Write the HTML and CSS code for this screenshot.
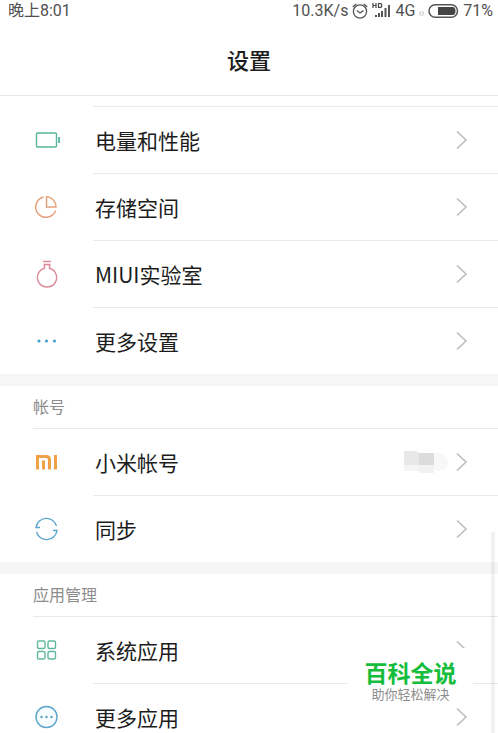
FILE: index.html
```html
<!DOCTYPE html>
<html lang="zh-CN">
<head>
<meta charset="utf-8">
<meta name="viewport" content="width=device-width, initial-scale=1">
<title>设置</title>
<link rel="stylesheet" href="styles.css">
</head>
<body>
<svg class="defs" aria-hidden="true">
  <symbol id="chevron" viewBox="0 0 12 20"><path d="M1 1.5 10 10 1 18.5" fill="none" stroke="#bdbdbd" stroke-width="1.6"/></symbol>
</svg>
<div class="screen">
  <div class="status">
    <span>晚上8:01</span>
    <div class="status-right">
      <span>10.3K/s</span>
      <svg class="alarm" width="16" height="16" viewBox="0 0 16 16" fill="none" stroke="#555" stroke-width="1.3"><circle cx="8" cy="8.5" r="6.6"/><path d="M.8 4 4.2 1M15.2 4 11.8 1M4.8 7.6 8 10l3.400-2.400"/></svg>
      <svg class="signal" width="19" height="16" viewBox="0 0 19 16"><path d="M1 0v5M4 0v5M1 2.500h3M6.500.5v4h1.200q2 0 2-2t-2-2z" fill="none" stroke="#444" stroke-width="1.200"/><path d="M3 12h2v2H3zM6 10h2v4H6zM9 8h2v6H9zM12.500 5h2v9h-2zM16 2h2v12h-2z" fill="#555"/></svg>
      <span>4G</span>
      <svg class="data" width="5" height="16" viewBox="0 0 5 16" fill="none" stroke="#bbb"><path d="M1 12.500v-3L2.500 8M4 8.500v3L2.500 13"/></svg>
      <svg class="battery" width="31" height="16" viewBox="0 0 31 16"><rect x="1" y="1.700" width="28.500" height="12.600" rx="6.300" fill="none" stroke="#555" stroke-width="1.500"/><path d="M10 4h14.500q3 0 3 4t-3 4H10z" fill="#444"/></svg>
      <span>71%</span>
    </div>
  </div>
  <header><h1>设置</h1></header>
  <main>
    <section class="group first">
      <a class="row" href="#"><span class="icon"><svg width="28" height="26" viewBox="0 0 28 26" fill="none" stroke="#56b79d" stroke-width="1.400"><rect x="3.500" y="6" width="20" height="14" rx="1"/><path d="M26 10v6" stroke-width="1.800"/></svg></span><span class="label">电量和性能</span><svg class="chevron"><use href="#chevron"/></svg></a>
      <a class="row" href="#"><span class="icon"><svg width="26" height="26" viewBox="0 0 26 26" fill="none" stroke="#e6a27d" stroke-width="1.500"><path d="M10.500 3A10.300 10.300 0 1 0 22.700 16.500M13.500 2.700V13H23A10 10 0 0 0 13.500 2.700z"/></svg></span><span class="label">存储空间</span><svg class="chevron"><use href="#chevron"/></svg></a>
      <a class="row" href="#"><span class="icon"><svg width="26" height="28" viewBox="0 0 26 28" fill="none" stroke="#dc8998" stroke-width="1.400"><path d="M10 1.500h8M10.500 4.500h7M11.500 4.500v3.700a9.600 9.600 0 1 0 5 0V4.500"/></svg></span><span class="label">MIUI实验室</span><svg class="chevron"><use href="#chevron"/></svg></a>
      <a class="row" href="#"><span class="icon"><svg width="26" height="26" viewBox="0 0 26 26" fill="#43a0cb"><circle cx="6" cy="13" r="1.600"/><circle cx="13.500" cy="13" r="1.600"/><circle cx="21.500" cy="13" r="1.600"/></svg></span><span class="label">更多设置</span><svg class="chevron"><use href="#chevron"/></svg></a>
    </section>
    <section class="group">
      <h2>帐号</h2>
      <a class="row" href="#"><span class="icon"><svg width="26" height="26" viewBox="0 0 26 26" fill="none" stroke="#f0a047" stroke-width="3"><path d="M4.500 20.500V7.500H13Q16.500 7.500 16.500 11v9.500M10.500 11.500v9M22.500 6v14.500"/></svg></span><span class="label">小米帐号</span><svg class="masked" width="46" height="24" viewBox="0 0 46 24"><path d="M0 1h15v20H0z" fill="#f5f5f5"/><path d="M30 3h6q8 3 8 10t-8 8h-6z" fill="#f8f8f8"/><path d="M0 1h10l5 2v12H0z" fill="#e8e8e8"/><path d="M15 3h15v12H15z" fill="#dcdcdc"/><path d="M15 15h15v8H15z" fill="#f2f2f2"/></svg><svg class="chevron"><use href="#chevron"/></svg></a>
      <a class="row" href="#"><span class="icon"><svg width="26" height="26" viewBox="0 0 26 26" fill="none" stroke="#5aa5cb" stroke-width="1.400"><path d="M7 11.500H3A10.500 10.500 0 0 1 23.500 10M20 14.500h4A10.500 10.500 0 0 1 3.500 16"/></svg></span><span class="label">同步</span><svg class="chevron"><use href="#chevron"/></svg></a>
    </section>
    <section class="group">
      <h2>应用管理</h2>
      <a class="row" href="#"><span class="icon"><svg width="26" height="26" viewBox="0 0 26 26" fill="none" stroke="#60b99e" stroke-width="1.400"><rect x="4.500" y="4" width="7.500" height="7.500" rx="1.500"/><rect x="15" y="4" width="7.500" height="7.500" rx="1.500"/><rect x="4.500" y="14.500" width="7.500" height="7.500" rx="1.500"/><rect x="15" y="14.500" width="7.500" height="7.500" rx="1.500"/></svg></span><span class="label">系统应用</span><svg class="chevron"><use href="#chevron"/></svg></a>
      <a class="row" href="#"><span class="icon"><svg width="26" height="26" viewBox="0 0 26 26" fill="#5f9dbe"><circle cx="13.500" cy="13" r="10.500" fill="#f7fcff" stroke="#5aa5cb" stroke-width="1.400"/><circle cx="8.500" cy="13" r="1.200"/><circle cx="13.500" cy="13" r="1.200"/><circle cx="18.500" cy="13" r="1.200"/></svg></span><span class="label">更多应用</span><svg class="chevron"><use href="#chevron"/></svg></a>
    </section>
  </main>
  <div class="scroll-thumb"></div>
  <aside class="brand"><strong>百科全说</strong><span>助你轻松解决</span></aside>
</div>
</body>
</html>
```
FILE: styles.css
```css
* {
  box-sizing: border-box;
}

body {
  margin: 0;
  background: #fff;
  color: #1c1c1c;
  font-family: "Noto Sans CJK SC", sans-serif;
}

.defs {
  position: absolute;
  width: 0;
  height: 0;
}

.screen {
  position: relative;
  height: 100vh;
  overflow: hidden;
}

.status {
  display: flex;
  justify-content: space-between;
  align-items: center;
  height: 22px;
  padding: 0 5px 0 8px;
  color: #505050;
  font-family: Roboto, "Noto Sans CJK SC", sans-serif;
  font-size: 16px;
  line-height: 22px;
}

.status-right {
  display: flex;
  align-items: center;
  gap: 4px;
}

header {
  height: 74px;
  border-bottom: 1px solid #e6e6e6;
}

h1 {
  margin: 0;
  font-size: 22px;
  font-weight: 500;
  line-height: 74px;
  text-align: center;
}

.group {
  border-top: 12px solid #f6f6f6;
}

.group.first {
  border-top: 0;
  padding-top: 10px;
}

h2 {
  margin: 0;
  padding: 0 0 2px 33px;
  color: #8c8c8c;
  font-size: 16px;
  font-weight: 400;
  line-height: 40px;
}

.row {
  display: flex;
  align-items: center;
  height: 67px;
  padding: 0 30px 0 33px;
  background: linear-gradient(#e9e9e9, #e9e9e9) 93px 0 / 100% 1px no-repeat;
  color: inherit;
  text-decoration: none;
}

h2 + .row {
  background-position-x: 33px;
}

.icon {
  display: flex;
  width: 62px;
}

.label {
  flex: 1;
  font-size: 21px;
  line-height: 32px;
}

.chevron {
  width: 12px;
  height: 20px;
}

.masked {
  margin-right: 6px;
}

.scroll-thumb {
  position: absolute;
  top: 532px;
  right: 3px;
  bottom: 0;
  width: 4px;
  background: rgba(0, 0, 0, 0.05);
}

.brand {
  position: absolute;
  right: 25px;
  bottom: 27px;
  display: flex;
  flex-direction: column;
  align-items: center;
  width: 125px;
  height: 58px;
  padding-top: 14px;
  background: #fff;
  font-family: "Liberation Sans", "Noto Sans CJK SC", sans-serif;
}

.brand strong {
  color: #14bd3c;
  font-size: 23px;
  font-weight: 700;
  line-height: 24px;
}

.brand span {
  color: #8c8c8c;
  font-size: 13px;
  line-height: 18px;
}
```
